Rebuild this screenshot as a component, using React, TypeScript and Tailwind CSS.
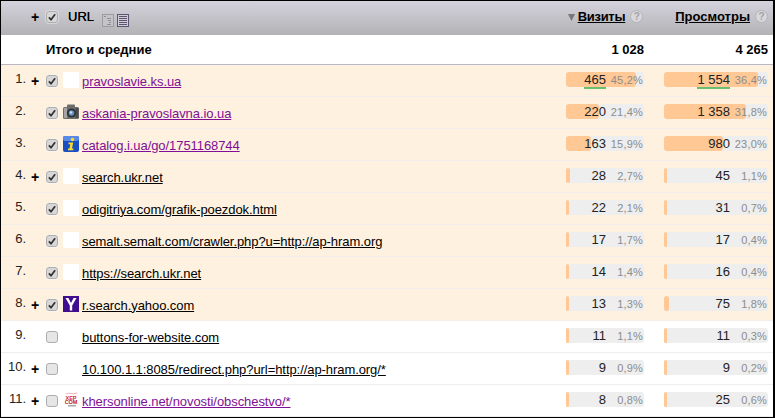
import React from "react";

type Row = {
  n: number; plus: boolean; on: boolean; icon?: string; white?: boolean; url: string; visited?: boolean;
  v: string; vp: string; vw: number; p: string; pp: string; pw: number; green?: boolean;
};

const rows: Row[] = [
  { n: 1, plus: true, on: true, white: true, url: "pravoslavie.ks.ua", visited: true, v: "465", vp: "45,2%", vw: 70, p: "1 554", pp: "36,4%", pw: 94, green: true },
  { n: 2, plus: false, on: true, icon: "camera", url: "askania-pravoslavna.io.ua", visited: true, v: "220", vp: "21,4%", vw: 33, p: "1 358", pp: "31,8%", pw: 82 },
  { n: 3, plus: false, on: true, icon: "info", url: "catalog.i.ua/go/1751168744", visited: true, v: "163", vp: "15,9%", vw: 25, p: "980", pp: "23,0%", pw: 59 },
  { n: 4, plus: true, on: true, white: true, url: "search.ukr.net", v: "28", vp: "2,7%", vw: 4, p: "45", pp: "1,1%", pw: 3 },
  { n: 5, plus: false, on: true, white: true, url: "odigitriya.com/grafik-poezdok.html", v: "22", vp: "2,1%", vw: 3, p: "31", pp: "0,7%", pw: 3 },
  { n: 6, plus: false, on: true, white: true, url: "semalt.semalt.com/crawler.php?u=http://ap-hram.org", v: "17", vp: "1,7%", vw: 3, p: "17", pp: "0,4%", pw: 3 },
  { n: 7, plus: false, on: true, white: true, url: "https://search.ukr.net", v: "14", vp: "1,4%", vw: 3, p: "16", pp: "0,4%", pw: 3 },
  { n: 8, plus: true, on: true, icon: "yahoo", url: "r.search.yahoo.com", v: "13", vp: "1,3%", vw: 3, p: "75", pp: "1,8%", pw: 5 },
  { n: 9, plus: false, on: false, url: "buttons-for-website.com", v: "11", vp: "1,1%", vw: 3, p: "11", pp: "0,3%", pw: 3 },
  { n: 10, plus: true, on: false, url: "10.100.1.1:8085/redirect.php?url=http://ap-hram.org/*", v: "9", vp: "0,9%", vw: 3, p: "9", pp: "0,2%", pw: 3 },
  { n: 11, plus: true, on: false, icon: "xep", url: "khersonline.net/novosti/obschestvo/*", visited: true, v: "8", vp: "0,8%", vw: 3, p: "25", pp: "0,6%", pw: 3 },
];

function Check({ on }: { on: boolean }) {
  return (
    <span className={`flex h-[12px] w-[12px] items-center justify-center rounded-[3px] border border-[#adadad] shadow-[0_0_0_1px_rgba(255,255,255,0.35)] ${on ? "bg-[#d8d8d8]" : "bg-[#e6e6e6]"}`}>
      {on && (
        <svg width="8" height="8" viewBox="0 0 9 9">
          <path d="M1 5 L3.4 7.5 L8 1.5" fill="none" stroke="#333" strokeWidth="2" />
        </svg>
      )}
    </span>
  );
}

function Favicon({ row }: { row: Row }) {
  if (row.white) return <span className="block h-4 w-4 bg-white" />;
  if (row.icon === "camera")
    return (
      <svg className="block" width="16" height="16" viewBox="0 0 16 16">
        <rect x="4" y="0.5" width="8" height="3.5" rx="1" fill="#6b6b6b" />
        <rect x="0" y="3" width="16" height="12" rx="1.5" fill="#6e6e6e" />
        <rect x="1" y="4" width="3" height="10" fill="#a5a5a5" />
        <rect x="12.5" y="4" width="3" height="10" fill="#4c4c4c" />
        <circle cx="8.5" cy="9" r="4.6" fill="#303030" />
        <circle cx="8.5" cy="9" r="2.8" fill="#5f93c8" />
        <circle cx="8" cy="8.5" r="1.2" fill="#c8e0f5" />
      </svg>
    );
  if (row.icon === "info")
    return (
      <svg className="block" width="16" height="16" viewBox="0 0 16 16">
        <rect width="16" height="16" rx="2" fill="#1a4fc4" />
        <rect x="0" y="0" width="16" height="5" rx="2" fill="#5a8ae8" />
        <circle cx="9.5" cy="3.5" r="1.8" fill="#f7dc2a" />
        <path d="M5.5 6.5 H10.2 L9 12.5 H10.4 V14.2 H5 V12.5 H6.5 L7.3 8.2 H5.5 Z" fill="#f7dc2a" />
      </svg>
    );
  if (row.icon === "yahoo")
    return (
      <svg className="block" width="16" height="16" viewBox="0 0 16 16">
        <rect width="16" height="16" fill="#400d8f" />
        <path d="M2.5 2 H5.4 L8 7 L10.6 2 H13.5 L9.2 9.5 V14.5 H6.8 V9.5 Z" fill="#fff" />
      </svg>
    );
  if (row.icon === "xep")
    return (
      <svg className="block" width="16" height="16" viewBox="0 0 16 16">
        <path d="M3 2 C6 0 9 3 14 1" fill="none" stroke="#f0b4b4" strokeWidth="1" />
        <text x="8" y="7.5" textAnchor="middle" fontFamily="Liberation Sans" fontWeight="700" fontSize="5.5" fill="#d42a2a">ХЕР</text>
        <text x="8" y="12" textAnchor="middle" fontFamily="Liberation Sans" fontWeight="700" fontSize="5.5" fill="#c22020">СОМ</text>
        <rect x="5" y="13" width="8" height="1.5" fill="#a8a8a8" />
      </svg>
    );
  return <span className="block h-4 w-4" />;
}

function Bar({ w, width, value, pct, green }: { w: number; width: string; value: string; pct: string; green?: boolean }) {
  return (
    <div className={`relative mb-[2px] h-[15px] rounded-[3px] bg-[#eeeeee] ${width}`}>
      <div className="absolute inset-y-0 left-0 rounded-[3px] bg-[#ffc894]" style={{ width: w }} />
      <div className="relative flex h-full items-center justify-end pr-[1px]">
        <span className="relative text-[13px] leading-[15px] text-[#222]">
          {value}
          {green && <span className="absolute inset-x-0 -bottom-[2px] h-[2px] bg-[#69bf6b]" />}
        </span>
        <span className="mt-[2px] w-[37px] text-right text-[11px] leading-[15px] tracking-[0.2px] text-[#8c8c8c]">{pct}</span>
      </div>
    </div>
  );
}

function Help({ className }: { className?: string }) {
  return (
    <span className={`flex h-[13px] w-[13px] items-center justify-center rounded-full border border-[#b4b4b8] bg-[#d8d8dc] text-[10px] font-bold leading-none text-[#a2a2a2] ${className ?? ""}`}>?</span>
  );
}

export default function App() {
  return (
    <div className="h-[418px] w-[775px] overflow-hidden border-y border-l border-r-2 border-black bg-white font-['Liberation_Sans',sans-serif] text-[13px] text-black">
      <div className="flex h-[34px] items-center bg-gradient-to-b from-[#d4d2dc] to-[#b3b3b6] pb-[3px]">
        <span className="ml-[30px] w-[15px] text-[14px] font-bold leading-none">+</span>
        <Check on />
        <span className="ml-[10px] text-[13px] leading-none [text-shadow:0_0_0.4px_#000]">URL</span>
        <svg className="ml-[8px] mt-[7px]" width="27" height="13" viewBox="0 0 27 13">
          <rect x="0.5" y="0.5" width="11" height="12" fill="#c4c3c9" stroke="#9c9c9c" />
          <path d="M2 2.5 H4 M5 4.5 H9 M6 6.5 H9 M7 8.5 H9 M5 10.5 H9" stroke="#8f8f8f" />
          <rect x="15.5" y="0.5" width="11" height="12" fill="#cfcdd8" stroke="#5c5470" />
          <path d="M17 2.5 H25 M17 4.5 H25 M17 6.5 H25 M17 8.5 H25 M17 10.5 H25" stroke="#5c5470" />
        </svg>
        <svg className="ml-auto mr-[3px] mt-[2px]" width="7" height="7" viewBox="0 0 7 7">
          <path d="M0 0 H7 L3.5 7 Z" fill="#777" />
        </svg>
        <span className="text-[13px] font-bold tracking-[-0.3px] underline">Визиты</span>
        <Help className="ml-[5px]" />
        <span className="ml-[32px] text-[13px] font-bold underline">Просмотры</span>
        <Help className="ml-[5px] mr-[5px]" />
      </div>
      <div className="flex h-[30px] items-center border-b border-[#b9b6c6] text-[13px] font-bold">
        <span className="ml-[45px] flex-1">Итого и средние</span>
        <span className="w-[78px] text-right">1 028</span>
        <span className="mr-[5px] ml-[20px] w-[104px] text-right">4 265</span>
      </div>
      {rows.map((r) => (
        <div key={r.n} className={`flex h-[32px] items-center border-b ${r.on ? "border-[#f3eeea] bg-[#fef1df]" : "border-[#eeeeee] bg-white"}`}>
          <span className="w-[25px] pb-[5px] text-right text-[13px] leading-none text-[#222]">{r.n}.</span>
          <span className="ml-[5px] w-[15px] text-[14px] font-bold leading-none">{r.plus ? "+" : ""}</span>
          <Check on={r.on} />
          <span className="mb-[1px] ml-[5px] mr-[3px]"><Favicon row={r} /></span>
          <a className={`mt-[2px] flex-1 text-[13px] tracking-[-0.07px] underline ${r.visited ? "text-[#800f96]" : "text-black"}`}>{r.url}</a>
          <Bar w={r.vw} width="w-[78px]" value={r.v} pct={r.vp} green={r.green} />
          <span className="w-[20px]" />
          <Bar w={r.pw} width="mr-[5px] w-[104px]" value={r.p} pct={r.pp} green={r.green} />
        </div>
      ))}
    </div>
  );
}
